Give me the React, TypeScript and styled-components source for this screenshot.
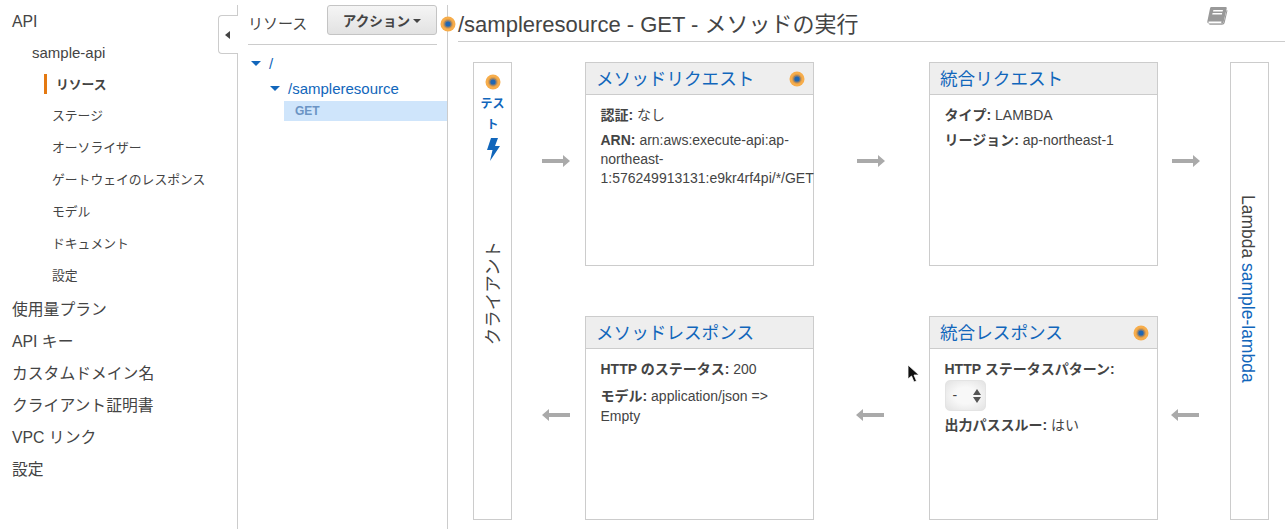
import React from "react";
import styled, { createGlobalStyle } from "styled-components";

const GlobalStyle = createGlobalStyle`
  html, body {
    margin: 0;
    padding: 0;
    background: #ffffff;
    overflow: hidden;
  }
  body {
    font-family: "Liberation Sans", "Noto Sans CJK JP", sans-serif;
    color: #444444;
  }
`;

// Layout
const Page = styled.div`
  position: relative;
  display: flex;
  width: 1285px;
  height: 529px;
  overflow: hidden;
`;

const Nav = styled.nav`
  flex: none;
  width: 237px;
  padding-top: 5px;
  box-sizing: border-box;
`;

const NavItem = styled.div<{ $level: number; $active?: boolean }>`
  position: relative;
  height: 32px;
  line-height: ${(p) => (p.$level === 0 ? 34 : p.$level === 2 && !p.$active ? 30 : 32)}px;
  white-space: nowrap;
  font-size: ${(p) => (p.$level === 2 ? 12.8 : p.$level === 1 ? 15 : 15.8)}px;
  font-weight: ${(p) => (p.$active ? 700 : 400)};
  padding-left: ${(p) => (p.$level === 2 ? (p.$active ? 56 : 52) : p.$level === 1 ? 32 : 12)}px;
  color: #444444;

  ${(p) =>
    p.$active &&
    `&::before {
      content: "";
      position: absolute;
      left: 44px;
      top: 5px;
      width: 3px;
      height: 20px;
      background: #e47911;
    }`}
`;

const Toggle = styled.div`
  position: absolute;
  left: 218px;
  top: 15px;
  width: 20px;
  height: 39px;
  box-sizing: border-box;
  background: #ffffff;
  border: 1px solid #cccccc;
  border-right: none;
  border-radius: 4px 0 0 4px;
  display: flex;
  align-items: center;
  justify-content: center;

  &::before {
    content: "";
    border-style: solid;
    border-width: 4px 5px 4px 0;
    border-color: transparent #444444 transparent transparent;
    margin-left: -2px;
  }
`;

const ResourcePanel = styled.section`
  flex: none;
  width: 211px;
  height: 524px;
  margin-top: 5px;
  box-sizing: border-box;
  border-left: 1px solid #cccccc;
  border-right: 1px solid #cccccc;
`;

const PanelHead = styled.div`
  display: flex;
  align-items: flex-start;
  justify-content: space-between;
  height: 40px;
  margin: 0 10px 0 10px;
  border-bottom: 1px solid #cccccc;
  box-sizing: border-box;
`;

const PanelLabel = styled.span`
  font-size: 15px;
  line-height: 38px;
  color: #444444;
`;

const ActionButton = styled.button`
  width: 110px;
  height: 30px;
  padding: 0;
  font-family: inherit;
  font-size: 13.6px;
  font-weight: 700;
  color: #444444;
  background: linear-gradient(#f5f5f5, #e2e2e2);
  border: 1px solid #c4c4c4;
  border-radius: 3px;
  display: flex;
  align-items: center;
  justify-content: center;
  gap: 3px;

  &::after {
    content: "";
    border-style: solid;
    border-width: 4px 4px 0;
    border-color: #444444 transparent transparent;
    margin-top: 1px;
  }
`;

const Tree = styled.div`
  padding-top: 6px;
  font-size: 15px;
`;

const TreeRow = styled.div<{ $indent: number }>`
  display: flex;
  align-items: center;
  height: 25px;
  padding-left: ${(p) => p.$indent}px;
  gap: 8px;
  color: #1166bb;
`;

const Caret = styled.span`
  flex: none;
  border-style: solid;
  border-width: 5px 5px 0;
  border-color: #1166bb transparent transparent;
`;

const MethodRow = styled.div`
  height: 20px;
  line-height: 20px;
  margin-left: 46px;
  padding-left: 11px;
  font-size: 12px;
  font-weight: 700;
  color: #6b94c4;
  background: #cfe5fb;
`;

const Main = styled.main`
  flex: 1;
  position: relative;
  min-width: 0;
`;

const TitleBar = styled.header`
  display: flex;
  align-items: center;
  justify-content: space-between;
  height: 42px;
  margin-left: 10px;
  box-sizing: border-box;
  padding: 3px 57px 0 0;
  border-bottom: 1px solid #cccccc;
  white-space: nowrap;
`;

const Title = styled.h1`
  margin: 0;
  font-size: 22px;
  font-weight: 400;
  color: #444444;
`;

const TitleDot = styled.div`
  position: absolute;
  left: -8px;
  top: 16px;
`;

const BookWrap = styled.div`
  margin-bottom: 12px;
  line-height: 0;
`;

const Flow = styled.div`
  display: grid;
  grid-template-columns: 39px 73px 229px 115px 229px 72px 39px;
  grid-template-rows: 204px 50px 204px;
  margin: 20px 0 0 25px;
`;

const SideBox = styled.div<{ $column: number }>`
  grid-column: ${(p) => p.$column};
  grid-row: 1 / 4;
  border: 1px solid #cccccc;
  box-sizing: border-box;
  position: relative;
`;

const TestLink = styled.div`
  display: flex;
  flex-direction: column;
  align-items: center;
  padding-top: 11px;
  color: #1166bb;
  font-size: 12px;
  font-weight: 700;
  line-height: 21px;
  text-align: center;
`;

const TestText = styled.div`
  width: 26px;
  margin-top: 4px;
  margin-bottom: 2px;
`;

const VerticalText = styled.div`
  position: absolute;
  left: 0;
  right: 0;
  display: flex;
  justify-content: center;
  writing-mode: vertical-rl;
  text-orientation: sideways;
  font-size: 17.5px;
  line-height: 36px;
  white-space: nowrap;
`;

const ClientLabel = styled(VerticalText)`
  top: 178px;
  padding-right: 1px;
  transform: rotate(180deg);
`;

const LambdaLabel = styled(VerticalText)`
  top: 132px;
  padding-right: 2px;
`;

const SideLink = styled.span`
  color: #1166bb;
`;

const ArrowCell = styled.div<{ $column: number; $row: number; $left: number; $top: number }>`
  grid-column: ${(p) => p.$column};
  grid-row: ${(p) => p.$row};
  padding: ${(p) => p.$top}px 0 0 ${(p) => p.$left}px;
  line-height: 0;
`;

const Card = styled.article<{ $column: number; $row: number }>`
  grid-column: ${(p) => p.$column};
  grid-row: ${(p) => p.$row};
  border: 1px solid #cccccc;
  box-sizing: border-box;
  min-width: 0;
`;

const CardHead = styled.div`
  display: flex;
  align-items: center;
  justify-content: space-between;
  height: 32px;
  padding: 0 8px 3px 10px;
  background: #eeeeee;
  border-bottom: 1px solid #cccccc;
  box-sizing: border-box;
  font-size: 17.6px;
  color: #1166bb;
  white-space: nowrap;
`;

const CardDot = styled.div`
  margin-top: 3px;
`;

const CardBody = styled.div`
  padding: 11px 0 0 14.5px;
  font-size: 14px;
  line-height: 19px;
  color: #444444;
`;

const Line = styled.div`
  margin-bottom: 6px;
`;

const ArnLine = styled(Line)`
  white-space: pre;
  margin-right: -2px;
`;

const ModelLine = styled(Line)`
  margin-top: 7px;
  line-height: 20px;
`;

const Select = styled.div`
  display: flex;
  align-items: center;
  justify-content: space-between;
  width: 41px;
  height: 31px;
  box-sizing: border-box;
  margin: -5px 0 5px;
  padding: 0 3px 0 7px;
  background: radial-gradient(ellipse at center, #f8f8f8 40%, #e2e2e2 100%);
  border: 1px solid #e4e4e4;
  border-radius: 5px;
`;

const Cursor = styled.svg`
  position: absolute;
  left: 907px;
  top: 364px;
`;

function Dot({ size = 16 }: { size?: number }) {
  return (
    <svg width={size} height={size} viewBox="0 0 16 16" style={{ display: "block", flex: "none" }}>
      <circle cx="8" cy="8" r="7.5" fill="#f7ad4b" />
      <circle cx="8" cy="8" r="5" fill="#dd9c4a" />
      <circle cx="8" cy="8" r="3.8" fill="#8a7f73" />
      <circle cx="8" cy="8" r="2.6" fill="#1f67b4" />
    </svg>
  );
}

function Arrow({ left }: { left?: boolean }) {
  return (
    <svg width="28" height="12" viewBox="0 0 28 12">
      {left ? (
        <path d="M0 6 L7 0 V4 H28 V8 H7 V12 Z" fill="#aaaaaa" />
      ) : (
        <path d="M28 6 L21 0 V4 H0 V8 H21 V12 Z" fill="#aaaaaa" />
      )}
    </svg>
  );
}

function Book() {
  return (
    <svg width="22" height="20" viewBox="0 0 22 20">
      <path
        d="M5 1 H20 Q21 1 20.7 2.5 L17.6 16 Q17.3 17.5 15.5 17.5 H3 Q1 17.5 1.3 15.4 L4 2.5 Q4.2 1 5 1 Z"
        fill="#999999"
      />
      <path d="M2.5 15.6 H15.5 L15.1 17.4 H3 Q2.2 16.8 2.5 15.6 Z" fill="#ffffff" />
      <path d="M7.4 4 H17 L16.6 5.5 H7 Z M6.6 7 H16.2 L15.9 8.5 H6.2 Z" fill="#ffffff" />
      <path d="M20.6 4 L21.5 4.5 L18.6 17 Q18.2 18.8 16 18.8 H3.5 L3 17.6 H15.5 Q17.4 17.6 17.7 16 Z" fill="#999999" />
    </svg>
  );
}

export default function App() {
  const subItems = ["ステージ", "オーソライザー", "ゲートウェイのレスポンス", "モデル", "ドキュメント", "設定"];
  const topItems = ["使用量プラン", "API キー", "カスタムドメイン名", "クライアント証明書", "VPC リンク", "設定"];

  return (
    <Page>
      <GlobalStyle />
      <Nav>
        <NavItem $level={0}>API</NavItem>
        <NavItem $level={1}>sample-api</NavItem>
        <NavItem $level={2} $active>リソース</NavItem>
        {subItems.map((item) => (
          <NavItem $level={2} key={item}>{item}</NavItem>
        ))}
        {topItems.map((item) => (
          <NavItem $level={0} key={item}>{item}</NavItem>
        ))}
      </Nav>
      <Toggle />

      <ResourcePanel>
        <PanelHead>
          <PanelLabel>リソース</PanelLabel>
          <ActionButton>アクション</ActionButton>
        </PanelHead>
        <Tree>
          <TreeRow $indent={13}><Caret />/</TreeRow>
          <TreeRow $indent={32}><Caret />/sampleresource</TreeRow>
          <MethodRow>GET</MethodRow>
        </Tree>
      </ResourcePanel>

      <Main>
        <TitleDot><Dot /></TitleDot>
        <TitleBar>
          <Title>/sampleresource - GET - メソッドの実行</Title>
          <BookWrap><Book /></BookWrap>
        </TitleBar>
        <Flow>
          <SideBox $column={1}>
            <TestLink>
              <Dot />
              <TestText>テスト</TestText>
              <svg width="14" height="23" viewBox="0 0 14 23">
                <path d="M5 0 H12 L9 8 H14 L4 23 L6.5 12 H1 Z" fill="#1166bb" />
              </svg>
            </TestLink>
            <ClientLabel>クライアント</ClientLabel>
          </SideBox>

          <ArrowCell $column={2} $row={1} $left={30} $top={93}><Arrow /></ArrowCell>
          <Card $column={3} $row={1}>
            <CardHead>メソッドリクエスト<CardDot><Dot /></CardDot></CardHead>
            <CardBody>
              <Line><b>認証:</b> なし</Line>
              <ArnLine><b>ARN:</b> arn:aws:execute-api:ap-{"\n"}northeast-{"\n"}1:576249913131:e9kr4rf4pi/*/GET</ArnLine>
            </CardBody>
          </Card>
          <ArrowCell $column={4} $row={1} $left={43} $top={93}><Arrow /></ArrowCell>
          <Card $column={5} $row={1}>
            <CardHead>統合リクエスト</CardHead>
            <CardBody>
              <Line><b>タイプ:</b> LAMBDA</Line>
              <Line><b>リージョン:</b> ap-northeast-1</Line>
            </CardBody>
          </Card>
          <ArrowCell $column={6} $row={1} $left={14} $top={93}><Arrow /></ArrowCell>

          <SideBox $column={7}>
            <LambdaLabel>Lambda&nbsp;<SideLink>sample-lambda</SideLink></LambdaLabel>
          </SideBox>

          <ArrowCell $column={2} $row={3} $left={30} $top={93}><Arrow left /></ArrowCell>
          <Card $column={3} $row={3}>
            <CardHead>メソッドレスポンス</CardHead>
            <CardBody>
              <Line><b>HTTP のステータス:</b> 200</Line>
              <ModelLine><b>モデル:</b> application/json =&gt;<br />Empty</ModelLine>
            </CardBody>
          </Card>
          <ArrowCell $column={4} $row={3} $left={42} $top={93}><Arrow left /></ArrowCell>
          <Card $column={5} $row={3}>
            <CardHead>統合レスポンス<CardDot><Dot /></CardDot></CardHead>
            <CardBody>
              <Line><b>HTTP ステータスパターン:</b></Line>
              <Select>
                -
                <svg width="10" height="16" viewBox="0 0 10 16">
                  <path d="M5 1 L9 7 H1 Z M5 15 L1 9 H9 Z" fill="#555555" />
                </svg>
              </Select>
              <Line><b>出力パススルー:</b> はい</Line>
            </CardBody>
          </Card>
          <ArrowCell $column={6} $row={3} $left={13} $top={93}><Arrow left /></ArrowCell>
        </Flow>
      </Main>

      <Cursor width="13" height="19" viewBox="0 0 13 19">
        <path d="M1 1 V15 L4.5 12 L7 18 L9.5 17 L7 11 H12 Z" fill="#111111" stroke="#ffffff" strokeWidth="0.8" />
      </Cursor>
    </Page>
  );
}
